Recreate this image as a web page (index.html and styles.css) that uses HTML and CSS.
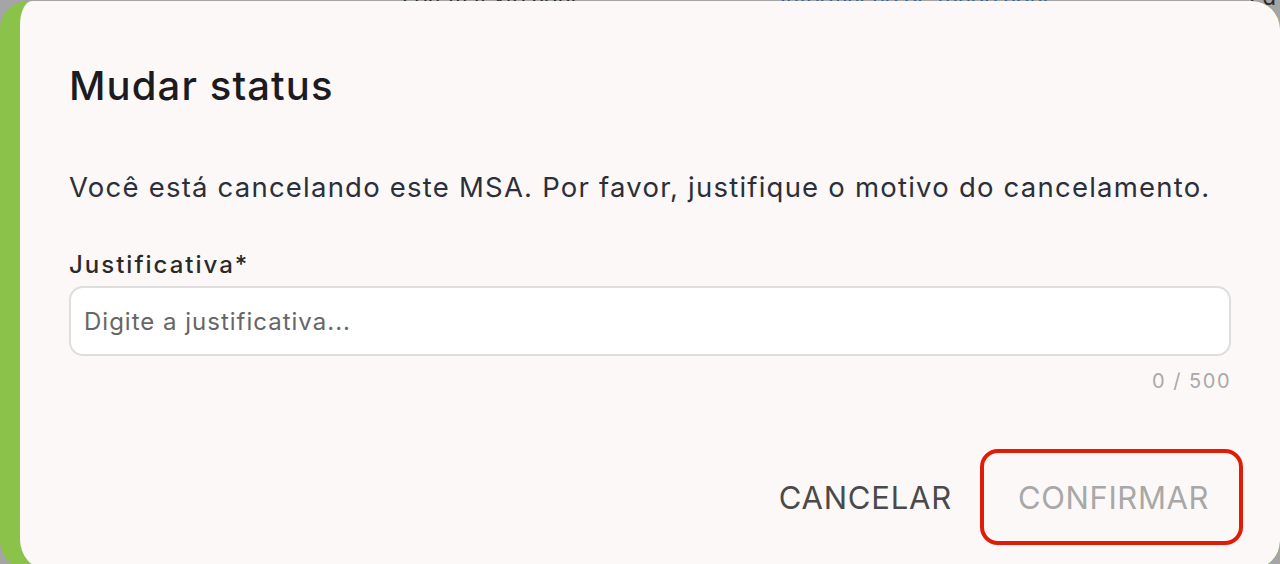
FILE: index.html
```html
<!DOCTYPE html>
<html lang="pt-BR">
<head>
<meta charset="utf-8">
<title>Mudar status</title>
<link rel="stylesheet" href="styles.css">
</head>
<body>
<div class="backdrop">
  <div class="under-row">
    <span class="under-text u1">Lorem texto aqui</span>
    <span class="under-text u2">Informação de fundo aqui</span>
    <span class="under-text u3">Ed</span>
  </div>
</div>
<div class="dialog" role="dialog" aria-labelledby="dlg-title">
  <div class="dialog-inner">
    <h2 id="dlg-title" class="title">Mudar status</h2>
    <p class="message">Você está cancelando este MSA. Por favor, justifique o motivo do cancelamento.</p>
    <label class="field-label" for="just">Justificativa*</label>
    <input id="just" class="field-input" type="text" placeholder="Digite a justificativa..." maxlength="500">
    <div class="counter">0 / 500</div>
    <div class="actions">
      <button class="btn btn-cancel" type="button">CANCELAR</button>
      <button class="btn btn-confirm" type="button" disabled>CONFIRMAR</button>
    </div>
  </div>
</div>
</body>
</html>
```

FILE: styles.css
```css
* { box-sizing: border-box; }
html, body {
  margin: 0;
  padding: 0;
  width: 1280px;
  height: 564px;
  overflow: hidden;
}
body {
  background: #a5a5a5;
  font-family: Inter, "Noto Sans", sans-serif;
  position: relative;
}
.backdrop {
  height: 564px;
}
.under-row {
  display: flex;
  height: 12px;
  overflow: hidden;
  padding-top: 0;
}
.under-text {
  font-size: 22px;
  line-height: 22px;
  margin-top: -14px;
  color: #2a2a2a;
  white-space: nowrap;
}
.u1 { margin-left: 402px; width: 176px; overflow: hidden; }
.u2 { margin-left: 202px; width: 270px; overflow: hidden; color: #2b5fa0; }
.u3 { margin-left: auto; margin-right: 4px; }

.dialog {
  position: absolute;
  left: 0;
  top: 1px;
  width: 1280px;
  height: 568px;
  background: #8bc34a;
  border-radius: 28px;
  overflow: hidden;
}
.dialog-inner {
  margin-left: 20px;
  height: 100%;
  background: #fcf8f7;
  border-radius: 12px 28px 28px 26px / 24px 28px 28px 30px;
  padding: 59px 49px 0 49px;
  display: flex;
  flex-direction: column;
}
.title {
  margin: 0;
  font-size: 40px;
  font-weight: 500;
  letter-spacing: 1.1px;
  line-height: 52px;
  color: #1c1b1f;
}
.message {
  margin: 57px 0 0;
  font-size: 27.5px;
  line-height: 36px;
  letter-spacing: 1.22px;
  color: #2b2f3a;
  white-space: nowrap;
}
.field-label {
  margin-top: 46px;
  font-size: 24px;
  font-weight: 500;
  letter-spacing: 2px;
  line-height: 28px;
  color: #2a2a2a;
}
.field-input {
  margin-top: 7px;
  height: 70px;
  width: 100%;
  border: 2px solid #dedede;
  border-radius: 14px;
  background: #ffffff;
  padding: 0 13px;
  font-family: inherit;
  font-size: 24px;
  letter-spacing: 1px;
  color: #222;
  outline: none;
}
.field-input::placeholder { color: #666666; }
.counter {
  margin-top: 12px;
  text-align: right;
  font-size: 20px;
  letter-spacing: 1.5px;
  line-height: 26px;
  color: #a9a9a9;
}
.actions {
  margin-top: 55px;
  display: flex;
  justify-content: flex-end;
  align-items: center;
  gap: 24px;
  margin-right: -12px;
}
.btn {
  font-family: inherit;
  font-size: 31px;
  letter-spacing: 0.8px;
  background: transparent;
  border: 4px solid transparent;
  border-radius: 18px;
  height: 96px;
  padding: 0 34px;
  cursor: pointer;
}
.btn-cancel {
  color: #4a4a4a;
  padding: 0;
}
.btn-confirm {
  color: #a8a8a8;
  border-color: #e01b06;
  width: 263px;
  letter-spacing: 0.6px;
}
```
